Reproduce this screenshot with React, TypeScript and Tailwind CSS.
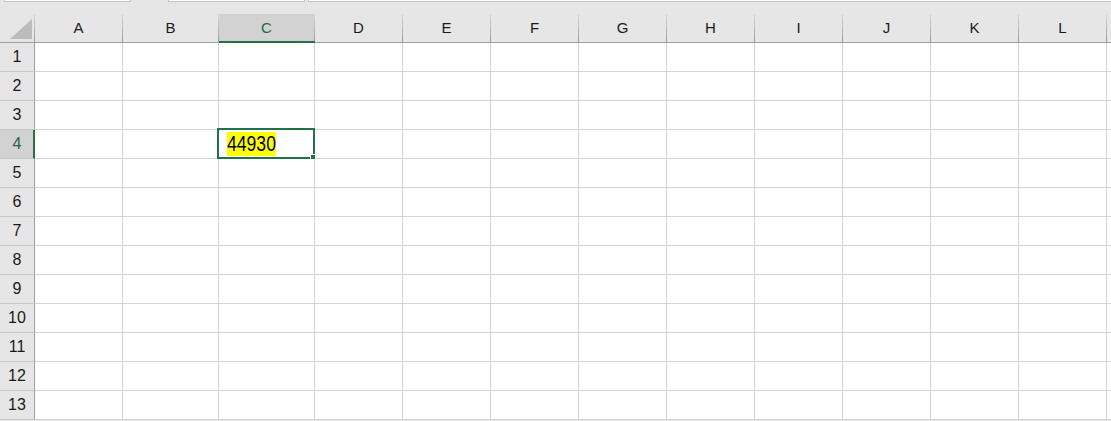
import React from "react";

const cols = [
  { l: "A", w: 88 },
  { l: "B", w: 96 },
  { l: "C", w: 96 },
  { l: "D", w: 88 },
  { l: "E", w: 88 },
  { l: "F", w: 88 },
  { l: "G", w: 88 },
  { l: "H", w: 88 },
  { l: "I", w: 88 },
  { l: "J", w: 88 },
  { l: "K", w: 88 },
  { l: "L", w: 88 },
];

const rows = Array.from({ length: 13 }, (_, i) => i + 1);

const font = { fontFamily: '"Liberation Sans", Arial, sans-serif' };

export default function App() {
  return (
    <div className="w-[1111px] h-[421px] overflow-hidden bg-[#e6e6e6] flex flex-col" style={font}>
      {/* top strip */}
      <div className="flex h-[2px] shrink-0">
        <div className="w-[4px]" />
        <div className="w-[127px] bg-white border-x border-b border-[#c6c6c6]" />
        <div className="w-[37px]" />
        <div className="w-[137px] bg-white border-x border-b border-[#c6c6c6]" />
        <div className="w-[3px]" />
        <div className="flex-1 bg-white border-l border-b border-[#c6c6c6]" />
      </div>
      <div className="h-[12px] shrink-0" />
      {/* column headers */}
      <div className="flex h-[29px] shrink-0">
        <div className="w-[35px] flex border-b border-[#9f9f9f]">
          <div className="flex-1 flex items-end justify-end pr-[2px] pb-[3px]">
            <svg width="22" height="20" viewBox="0 0 22 20">
              <polygon points="22,0 22,20 0,20" fill="#bcbcbc" />
            </svg>
          </div>
          <div className="w-px bg-linear-to-b from-[#d8d8d8] to-[#9c9c9c]" />
        </div>
        {cols.map((c) => {
          const sel = c.l === "C";
          return (
            <div
              key={c.l}
              style={{ width: c.w }}
              className={`flex ${sel ? "bg-[#d2d2d2] border-b-2 border-[#217346]" : "border-b border-[#9f9f9f]"}`}
            >
              <div
                className={`flex-1 flex items-center justify-center text-[15px] ${sel ? "text-[#1b6a3e] pt-px" : "text-[#1a1a1a]"}`}
              >
                {c.l}
              </div>
              <div className="w-px bg-linear-to-b from-[#d8d8d8] to-[#9c9c9c]" />
            </div>
          );
        })}
        <div className="flex-1 border-b border-[#9f9f9f]" />
      </div>
      {/* rows */}
      {rows.map((r) => {
        const selRow = r === 4;
        return (
          <div key={r} className="flex h-[29px] shrink-0">
            <div
              className={`w-[35px] flex items-center justify-center text-[16px] border-b border-b-[#c8c8c8] ${
                selRow ? "bg-[#d2d2d2] border-r-2 border-r-[#217346] text-[#1b6a3e] pl-px" : "border-r border-r-[#9f9f9f] text-[#1a1a1a]"
              }`}
            >
              {r}
            </div>
            {cols.map((c) => {
              const active = selRow && c.l === "C";
              return (
                <div
                  key={c.l}
                  style={{ width: c.w }}
                  className="relative bg-white border-r border-b border-[#d4d4d4]"
                >
                  {active && (
                    <>
                      <div className="absolute left-[-2px] top-[-2px] right-[-1px] bottom-[-1px] border-2 border-[#217346] flex items-center pl-[8px]">
                        <span className="inline-block origin-left scale-x-[0.8] text-[22px] leading-[23px] text-black bg-[#ffff00] pb-px">
                          44930
                        </span>
                      </div>
                      <div className="absolute right-[-3px] bottom-[-3px] w-[7px] h-[7px] bg-[#217346] border border-white" />
                    </>
                  )}
                </div>
              );
            })}
            <div className="flex-1 bg-white border-b border-[#d4d4d4]" />
          </div>
        );
      })}
    </div>
  );
}
